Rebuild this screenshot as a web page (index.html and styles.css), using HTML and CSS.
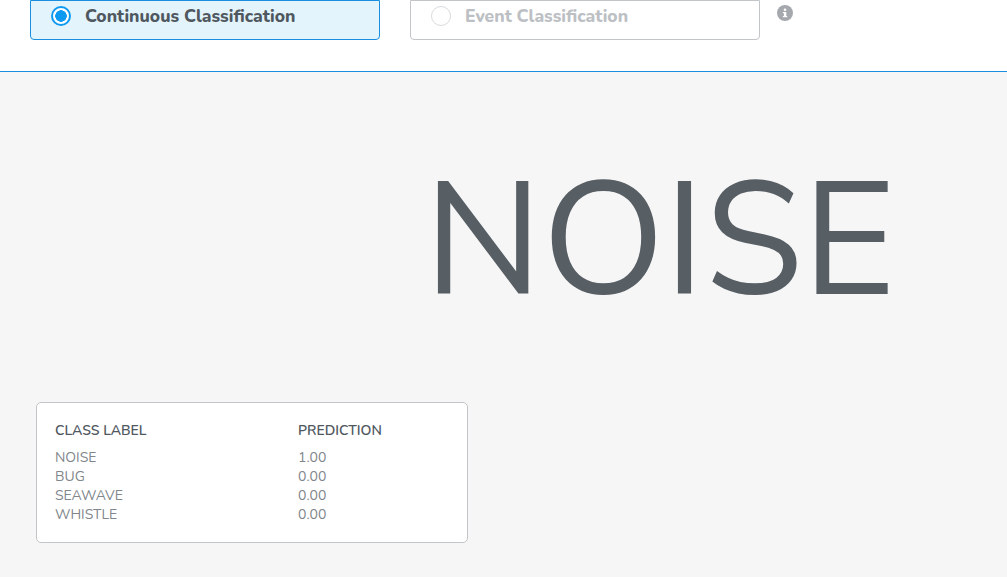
FILE: index.html
```html
<!DOCTYPE html>
<html lang="en">
<head>
<meta charset="utf-8">
<title>Classification</title>
<link rel="stylesheet" href="styles.css">
</head>
<body>
<header class="top">
  <div class="option option-on">
    <span class="radio radio-on"></span>
    <span class="option-label">Continuous Classification</span>
  </div>
  <div class="option option-off">
    <span class="radio radio-off"></span>
    <span class="option-label">Event Classification</span>
  </div>
  <svg class="info" width="16" height="16" viewBox="0 0 16 16" aria-hidden="true">
    <circle cx="8" cy="8" r="8" fill="#a5a9ae"/>
    <rect x="6.9" y="7" width="2.4" height="5" fill="#fff"/>
    <rect x="5.8" y="7" width="2" height="1.2" fill="#fff"/>
    <rect x="5.8" y="11" width="4.4" height="1.2" fill="#fff"/>
    <circle cx="8" cy="4.8" r="1.3" fill="#fff"/>
  </svg>
</header>
<main class="stage">
  <div class="result">NOISE</div>
  <section class="card">
    <div class="row head"><span class="c1">CLASS LABEL</span><span>PREDICTION</span></div>
    <div class="row"><span class="c1">NOISE</span><span>1.00</span></div>
    <div class="row"><span class="c1">BUG</span><span>0.00</span></div>
    <div class="row"><span class="c1">SEAWAVE</span><span>0.00</span></div>
    <div class="row"><span class="c1">WHISTLE</span><span>0.00</span></div>
  </section>
</main>
</body>
</html>
```
FILE: styles.css
```css
html, body { margin: 0; padding: 0; }
body {
  width: 1007px; height: 577px; overflow: hidden;
  font-family: "Nunito", "Lato", "Open Sans", sans-serif;
  background: #f6f6f6;
}
.top {
  height: 72px; box-sizing: border-box;
  background: #fff; border-bottom: 1px solid #1a8fe0;
  display: flex; align-items: flex-start; gap: 30px;
  padding-left: 30px;
}
.option {
  width: 350px; height: 40px; box-sizing: border-box;
  border-radius: 0 0 4px 4px;
  display: flex; align-items: center; gap: 14px;
  padding: 0 20px 8px; font-size: 17.5px; font-weight: 800;
}
.option-on { background: #e3f4fd; border: 1px solid #1a8fe0; color: #50585f; }
.option-off { background: #fff; border: 1px solid #c3c6c9; color: #bcc0c4; }
.radio { width: 20px; height: 20px; box-sizing: border-box; border-radius: 50%; flex: none; }
.radio-on { border: 2.5px solid #0f9af2; background: radial-gradient(circle, #0f9af2 0 5.5px, #fff 6px); }
.radio-off { border: 1px solid #d8dadc; background: #fff; }
.info { margin: 5px 0 0 -13px; }
.stage { height: 505px; padding: 0 0 0 36px; display: flex; flex-direction: column; }
.result {
  height: 330px; box-sizing: border-box; padding: 69px 0 0 388px;
  font-family: "Nunito Sans", "Nunito", "Lato", sans-serif;
  font-size: 160px; line-height: 200px; color: #575e64; font-weight: 450;
  letter-spacing: -0.5px;
}
.card {
  width: 432px; height: 141px; box-sizing: border-box;
  background: #fff; border: 1px solid #c3c6c9; border-radius: 5px;
  padding: 18px 18px 0; font-size: 14px; line-height: 19px; color: #80868b;
}
.row { display: flex; }
.c1 { width: 243px; }
.head { color: #50585f; font-weight: 600; margin-bottom: 8px; }
```
